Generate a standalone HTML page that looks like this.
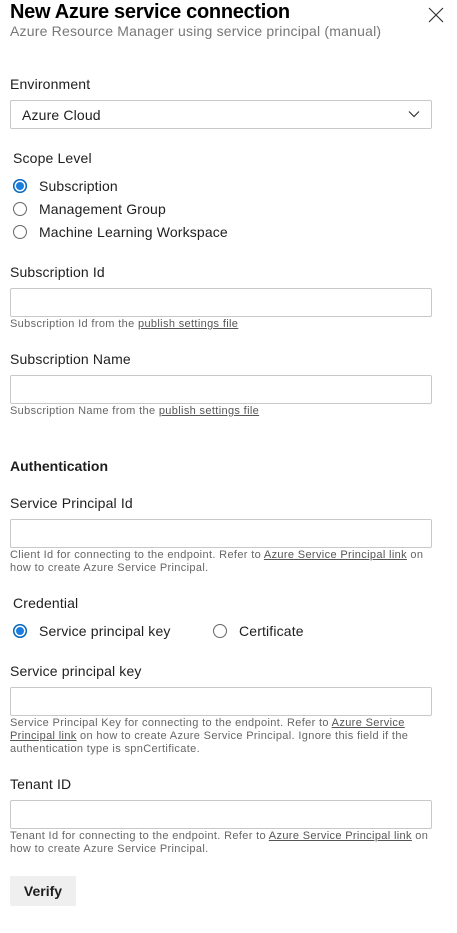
<!DOCTYPE html><html><head><style>
body{margin:0;width:457px;height:933px;background:#fff;font-family:"Liberation Sans",Arial,sans-serif;color:#000;position:relative;overflow:hidden}
.a{position:absolute;white-space:nowrap}
.l{font-size:14px;line-height:16px;color:#1e1e1e;letter-spacing:0.15px}
.in{position:absolute;left:10px;width:422px;height:27px;border:1px solid #c8c8c8;border-radius:2px;box-sizing:border-box}
.h{font-size:11px;line-height:13px;color:#666;left:10px;letter-spacing:0.35px}
.h u{color:#555}
.r{position:absolute;width:14px;height:14px;border:1px solid #666;border-radius:50%;box-sizing:border-box}
.r.on{border:none;background:#0f6cbd;box-shadow:inset 0 0 0 1.5px #0f6cbd}
.r.on:after{content:"";position:absolute;left:3px;top:3px;width:8px;height:8px;border-radius:50%;background:#1a7de0;box-shadow:0 0 0 1.5px #fff}
</style></head><body>
<div class="a" style="left:10px;top:0;font-size:20px;font-weight:bold;line-height:24px;letter-spacing:-0.3px">New Azure service connection</div>
<div class="a" style="left:10px;top:23px;font-size:14px;line-height:17px;color:#777;letter-spacing:0.2px">Azure Resource Manager using service principal (manual)</div>
<svg class="a" style="left:428px;top:7px" width="16" height="16"><path d="M1 1L15 15M15 1L1 15" stroke="#333" stroke-width="1.2"/></svg>
<div class="a l" style="left:10px;top:76px">Environment</div>
<div class="in" style="top:100px;height:29px"></div>
<div class="a l" style="left:22px;top:107px">Azure Cloud</div>
<svg class="a" style="left:408px;top:110px" width="12" height="8"><path d="M1 1.5L6 6.5L11 1.5" stroke="#333" fill="none" stroke-width="1.2"/></svg>
<div class="a l" style="left:13px;top:150px">Scope Level</div>
<div class="r on" style="left:13px;top:179px"></div><div class="a l" style="left:39px;top:178px">Subscription</div>
<div class="r" style="left:13px;top:202px"></div><div class="a l" style="left:39px;top:201px">Management Group</div>
<div class="r" style="left:13px;top:225px"></div><div class="a l" style="left:39px;top:224px">Machine Learning Workspace</div>
<div class="a l" style="left:10px;top:264px">Subscription Id</div>
<div class="in" style="top:288px;height:29px"></div>
<div class="a h" style="top:318px">Subscription Id from the <u>publish settings file</u></div>
<div class="a l" style="left:10px;top:351px">Subscription Name</div>
<div class="in" style="top:375px;height:29px"></div>
<div class="a h" style="top:405px">Subscription Name from the <u>publish settings file</u></div>
<div class="a l" style="left:10px;top:458px;font-weight:bold;letter-spacing:0">Authentication</div>
<div class="a l" style="left:10px;top:495px">Service Principal Id</div>
<div class="in" style="top:519px;height:29px"></div>
<div class="a h" style="top:549px">Client Id for connecting to the endpoint. Refer to <u>Azure Service Principal link</u> on<br>how to create Azure Service Principal.</div>
<div class="a l" style="left:13px;top:595px">Credential</div>
<div class="r on" style="left:13px;top:624px"></div><div class="a l" style="left:39px;top:623px">Service principal key</div>
<div class="r" style="left:213px;top:624px"></div><div class="a l" style="left:239px;top:623px">Certificate</div>
<div class="a l" style="left:10px;top:663px">Service principal key</div>
<div class="in" style="top:687px;height:29px"></div>
<div class="a h" style="top:717px">Service Principal Key for connecting to the endpoint. Refer to <u>Azure Service</u><br><u>Principal link</u> on how to create Azure Service Principal. Ignore this field if the<br>authentication type is spnCertificate.</div>
<div class="a l" style="left:10px;top:776px">Tenant ID</div>
<div class="in" style="top:800px;height:29px"></div>
<div class="a h" style="top:830px">Tenant Id for connecting to the endpoint. Refer to <u>Azure Service Principal link</u> on<br>how to create Azure Service Principal.</div>
<div class="a" style="left:10px;top:876px;width:66px;height:30px;background:#efefef;border-radius:2px;font-size:14px;font-weight:bold;line-height:30px;text-align:center;color:#1e1e1e">Verify</div>
</body></html>
